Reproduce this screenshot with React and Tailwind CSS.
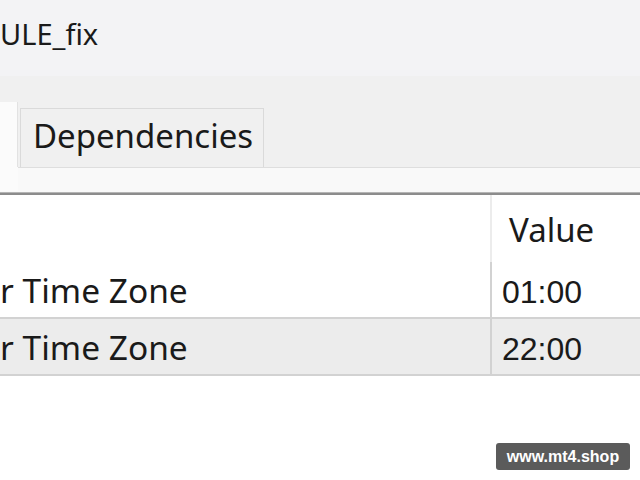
export default function App() {
  const ui = { fontFamily: '"Noto Sans", "Open Sans", sans-serif' }
  const digits = { fontFamily: '"Liberation Sans", Arial, sans-serif' }
  const rows = [
    { name: 'r Time Zone', value: '01:00', shade: false },
    { name: 'r Time Zone', value: '22:00', shade: true },
  ]

  return (
    <div className="relative w-[640px] h-[480px] overflow-hidden bg-white text-[#1a1a1a]" style={ui}>
      {/* title bar */}
      <div className="h-[76px] bg-[#f3f3f5] pt-[14px]">
        <span className="block text-[29px] leading-[40px]">ULE_fix</span>
      </div>

      {/* tab strip */}
      <div className="h-[91px] bg-[#f0f0f0] flex items-end">
        <div className="w-[18px] h-[65px] bg-[#fbfbfb] border-r border-[#e2e2e2]" />
        <div className="ml-[2px] w-[244px] h-[59px] border border-b-0 border-[#dadada] bg-[#f0f0f0] flex items-center pl-[12px] pb-[6px]">
          <span className="text-[33px] leading-none">Dependencies</span>
        </div>
      </div>
      <div className="h-[25px] bg-[#f9f9f9] border-t border-[#dedede] flex">
        <div className="w-[18px] h-full bg-[#fbfbfb] -mt-px" />
      </div>
      <div className="h-[3px] bg-[#8c8c8c] border-t border-[#b5b5b5]" />

      {/* table */}
      <div className="grid grid-cols-[492px_1fr]">
        <div className="h-[67px] border-r-2 border-[#ececec]" />
        <div className="h-[67px] pl-[17px] pt-[1px] flex items-center">
          <span className="text-[33px] leading-none">Value</span>
        </div>
        {rows.map((row, i) => (
          <div key={i} className="contents">
            <div
              className={`h-[57px] border-b-2 border-r-2 border-[#d2d2d2] pt-[2px] flex items-center ${row.shade ? 'bg-[#ececec]' : 'bg-white'}`}
            >
              <span className="text-[33.5px] leading-none">{row.name}</span>
            </div>
            <div
              className={`h-[57px] border-b-2 border-[#d2d2d2] pl-[10px] pt-[5px] flex items-center ${row.shade ? 'bg-[#ececec]' : 'bg-white'}`}
            >
              <span className="text-[32px] leading-none" style={digits}>
                {row.value}
              </span>
            </div>
          </div>
        ))}
      </div>

      {/* watermark */}
      <div
        className="absolute left-[496px] top-[443px] w-[134px] h-[27px] rounded-[3px] bg-[#5b5b5b] flex items-center justify-center text-white text-[16px] font-bold"
        style={digits}
      >
        www.mt4.shop
      </div>
    </div>
  )
}
